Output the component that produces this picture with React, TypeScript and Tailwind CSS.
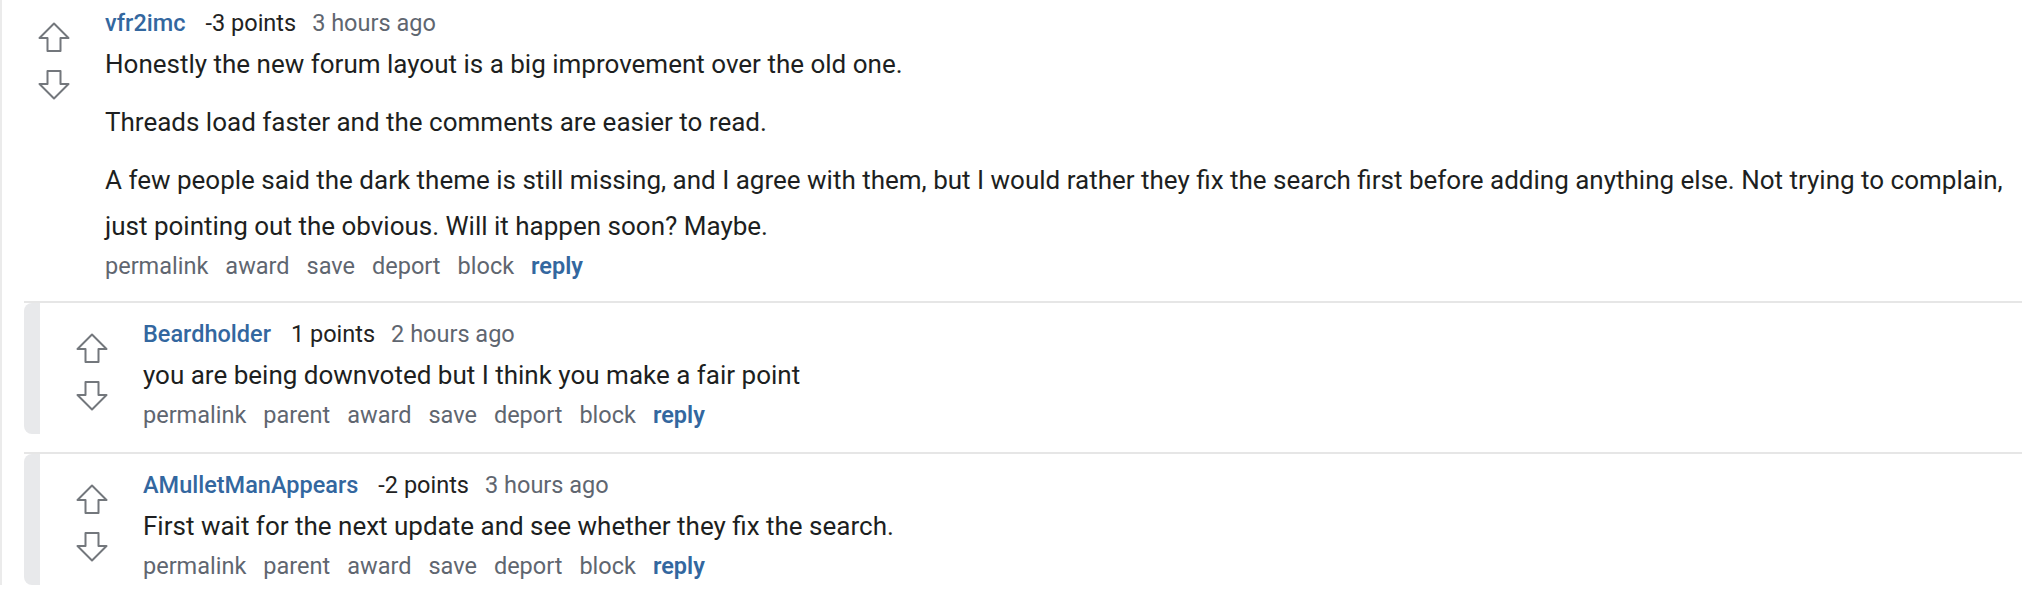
import React from "react";

type CommentData = {
  user: string;
  points: number;
  age: string;
  body: string[];
  isChild?: boolean;
  replies?: CommentData[];
};

const thread: CommentData = {
  user: "vfr2imc",
  points: -3,
  age: "3 hours ago",
  body: [
    "Honestly the new forum layout is a big improvement over the old one.",
    "Threads load faster and the comments are easier to read.",
    "A few people said the dark theme is still missing, and I agree with them, but I would rather they fix the search first before adding anything else. Not trying to complain, just pointing out the obvious. Will it happen soon? Maybe.",
  ],
  replies: [
    {
      user: "Beardholder",
      points: 1,
      age: "2 hours ago",
      body: ["you are being downvoted but I think you make a fair point"],
      isChild: true,
    },
    {
      user: "AMulletManAppears",
      points: -2,
      age: "3 hours ago",
      body: ["First wait for the next update and see whether they fix the search."],
      isChild: true,
    },
  ],
};

function UpArrow() {
  return (
    <svg width="32" height="30" viewBox="0 0 32 30" fill="none">
      <path d="M16 1.5 L30.5 16 L22.5 16 L22.5 29 L9.5 29 L9.5 16 L1.5 16 Z" stroke="#73777c" strokeWidth="2" strokeLinejoin="round" />
    </svg>
  );
}

function DownArrow() {
  return (
    <svg width="32" height="30" viewBox="0 0 32 30" fill="none">
      <path d="M9.5 1 L22.5 1 L22.5 14 L30.5 14 L16 28.5 L1.5 14 L9.5 14 Z" stroke="#73777c" strokeWidth="2" strokeLinejoin="round" />
    </svg>
  );
}

function Comment({ c }: { c: CommentData }) {
  const actions = c.isChild
    ? ["permalink", "parent", "award", "save", "deport", "block"]
    : ["permalink", "award", "save", "deport", "block"];
  return (
    <div>
      <div className="flex">
        <div className="w-[103px] shrink-0 flex flex-col items-center pt-[22px] gap-[18px]">
          <UpArrow />
          <DownArrow />
        </div>
        <div className="flex-1 min-w-0 pt-[6px] pr-[20px]">
          <div className="flex items-baseline text-[23.5px] leading-[34px]">
            <a className="font-medium text-[#33679f]">{c.user}</a>
            <span className="ml-[20px] text-[#222222]">{c.points} points</span>
            <span className="ml-[16px] text-[#5f6670]">{c.age}</span>
          </div>
          <div className="mt-[1px] text-[26px] leading-[46px] text-[#1d1f21]">
            {c.body.map((p, i) => (
              <p key={i} className={i > 0 ? "mt-3" : ""}>
                {p}
              </p>
            ))}
          </div>
          <div className="flex items-baseline gap-[17px] text-[23.5px] leading-[34px] text-[#5f6670]">
            {actions.map((a) => (
              <a key={a}>{a}</a>
            ))}
            <a className="font-semibold text-[#33679f]">reply</a>
          </div>
        </div>
      </div>
      {c.replies?.map((r) => (
        <div key={r.user} className="ml-[22px] mr-[18px] mt-[18px] border-t-2 border-[#e6e6e6]">
          <div className="border-l-[16px] border-[#e8e9eb] rounded-l-[8px] pt-[8px] pb-[2px]">
            <Comment c={r} />
          </div>
        </div>
      ))}
    </div>
  );
}

export default function App() {
  return (
    <div className="bg-white w-full h-[604px]" style={{ fontFamily: "Roboto, 'Noto Sans', sans-serif" }}>
      <div className="border-l-2 border-[#ebebeb]">
        <Comment c={thread} />
      </div>
    </div>
  );
}
